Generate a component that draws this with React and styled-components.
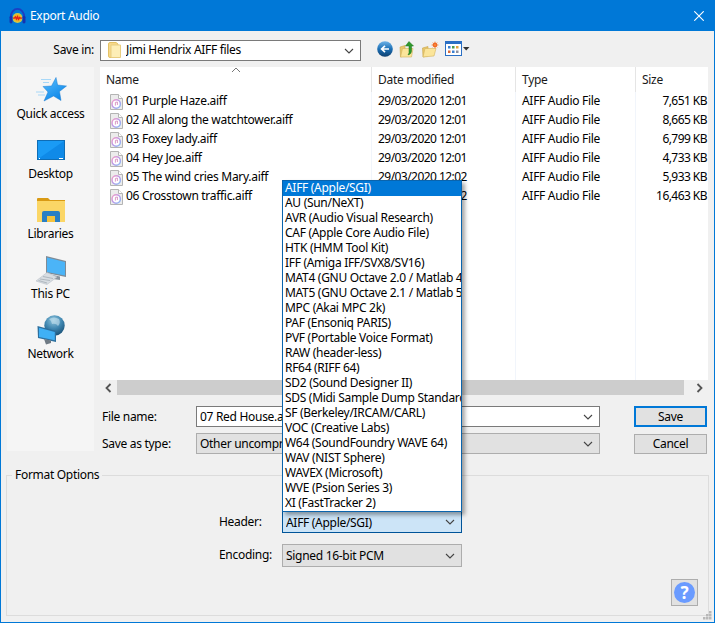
import React from "react";
import styled, { createGlobalStyle } from "styled-components";

const GlobalStyle = createGlobalStyle`
  html, body {
    margin: 0;
    padding: 0;
    background: #f0f0f0;
    overflow: hidden;
  }
  * {
    box-sizing: border-box;
  }
`;

const Window = styled.div`
  position: relative;
  width: 715px;
  height: 623px;
  border: 1px solid #0078d7;
  background: #f0f0f0;
  display: flex;
  flex-direction: column;
  font-family: "Noto Sans", "Open Sans", sans-serif;
  font-size: 12px;
  letter-spacing: -0.3px;
  color: #000;
`;
const TitleBar = styled.div`
  height: 30px;
  flex-shrink: 0;
  background: #0078d7;
  color: #fff;
  display: flex;
  align-items: center;
  padding: 0 10px 0 8px;
  gap: 4px;
`;
const TitleText = styled.div`
  flex: 1;
  padding-bottom: 1px;
`;
const TopArea = styled.div`
  padding: 0 6px;
`;
const SaveInRow = styled.div`
  margin-top: 9px;
  height: 21px;
  display: flex;
  align-items: center;
`;
const SaveInLabel = styled.div`
  width: 87px;
  text-align: right;
  margin-right: 6px;
  padding-bottom: 2px;
`;
const Combo = styled.div`
  position: relative;
  width: ${p => p.$width}px;
  height: ${p => p.$height || 21}px;
  display: flex;
  align-items: center;
  gap: 5px;
  padding: 0 4px 0 ${p => p.$pad || 3}px;
  background: ${p => p.$variant === "active" ? "#cce4f7" : p.$variant === "button" ? "#e1e1e1" : "#fff"};
  border: 1px solid ${p => p.$variant === "active" ? "#005499" : p.$variant === "button" ? "#adadad" : "#7a7a7a"};
`;
const ComboText = styled.div`
  flex: 1;
  white-space: nowrap;
  overflow: hidden;
  padding-bottom: ${p => p.$raised ? 2 : 0}px;
`;
const Toolbar = styled.div`
  display: flex;
  align-items: center;
  margin: 0 0 3px 16px;
  gap: 6px;
`;
const Main = styled.div`
  margin-top: 6px;
  display: flex;
  gap: 6px;
  align-items: flex-start;
`;
const Sidebar = styled.div`
  width: 87px;
  height: 384px;
  background: #f5f5f5;
  padding-top: 7px;
`;
const PlaceItem = styled.div`
  height: 60px;
  display: flex;
  flex-direction: column;
  align-items: center;
`;
const PlaceIcon = styled.div`
  height: 32px;
  display: flex;
  align-items: center;
  justify-content: center;
`;
const PlaceLabel = styled.div`
  line-height: 15px;
  white-space: nowrap;
`;
const RightColumn = styled.div`
  width: 608px;
`;
const ListView = styled.div`
  position: relative;
  height: 313px;
  background: #fff;
  display: flex;
  overflow: hidden;
`;
const SortCaret = styled.svg`
  position: absolute;
  left: 131px;
  top: 0;
`;
const ListColumn = styled.div`
  width: ${p => p.$width}px;
  flex-shrink: 0;
  border-right: 1px solid ${p => p.$last ? "transparent" : "#f1f5fb"};
`;
const ColumnHead = styled.div`
  height: 25px;
  margin-right: -1px;
  padding-left: ${p => p.$pad}px;
  padding-bottom: 1px;
  display: flex;
  align-items: center;
  color: #1a1a1a;
  border-right: 1px solid ${p => p.$last ? "transparent" : "#e5e5e5"};
`;
const Cell = styled.div`
  height: 19px;
  display: flex;
  align-items: center;
  white-space: nowrap;
  justify-content: ${p => p.$right ? "flex-end" : "flex-start"};
  padding-left: ${p => p.$pad}px;
  padding-bottom: 2px;
  gap: 3px;
  letter-spacing: ${p => p.$numeric ? "-0.55px" : "-0.3px"};
`;
const HScrollbar = styled.div`
  height: 15px;
  display: flex;
  align-items: center;
  justify-content: space-between;
  background: #f0f0f0;
`;
const ScrollArrow = styled.div`
  width: 17px;
  display: flex;
  justify-content: center;
`;
const ScrollThumb = styled.div`
  height: 15px;
  width: 567px;
  background: #cdcdcd;
  margin-right: auto;
`;
const FormGrid = styled.div`
  margin-top: 11px;
  display: grid;
  grid-template-columns: 96px 404px 34px 73px;
  grid-auto-rows: 21px;
  row-gap: 6px;
  align-items: center;
`;
const FormLabel = styled.div`
  padding-left: 2px;
`;
const Spacer = styled.div``;
const DialogButton = styled.div`
  height: ${p => p.$default ? 21 : 20}px;
  background: #e1e1e1;
  border: ${p => p.$default ? "2px solid #0078d7" : "1px solid #adadad"};
  display: flex;
  align-items: center;
  justify-content: center;
`;
const GroupBox = styled.fieldset`
  margin: 13px 5px 0;
  padding: 0 0 9px;
  border: 1px solid #dcdcdc;
  display: flex;
  flex-direction: column;
`;
const GroupLegend = styled.legend`
  margin-left: 5px;
  padding: 0 3px;
  line-height: 16px;
`;
const OptionRow = styled.div`
  display: grid;
  grid-template-columns: 63px 180px;
  align-items: center;
  padding-left: 212px;
  margin-top: ${p => p.$top}px;
`;
const OptionLabel = styled.div`
  padding-bottom: 2px;
`;
const PopupList = styled.div`
  position: absolute;
  left: -1px;
  bottom: 100%;
  width: 180px;
  background: #fff;
  border: 1px solid #0a64ad;
  box-shadow: 3px 3px 4px rgba(0, 0, 0, 0.35);
  overflow: hidden;
  z-index: 5;
`;
const PopupItem = styled.div`
  height: 15px;
  line-height: 13px;
  padding-left: 2px;
  white-space: nowrap;
  background: ${p => p.$selected ? "#0078d7" : "transparent"};
  color: ${p => p.$selected ? "#fff" : "#000"};
`;
const HelpButton = styled.div`
  align-self: flex-end;
  margin: 12px 10px 0 0;
  width: 27px;
  height: 27px;
  background: #e1e1e1;
  border: 1px solid #adadad;
  display: flex;
  align-items: center;
  justify-content: center;
`;
const HelpCircle = styled.div`
  width: 21px;
  height: 21px;
  border-radius: 50%;
  background: #6a9bff;
  color: #fff;
  font-size: 17px;
  font-weight: 700;
  line-height: 21px;
  text-align: center;
`;
const Grip = styled.svg`
  position: absolute;
  right: 2px;
  bottom: 2px;
`;

const ChevronDown = () => (
  <svg width="10" height="6" viewBox="0 0 10 6" style={{ flexShrink: 0, marginRight: 2 }}>
    <path d="M1 1 L5 5 L9 1" fill="none" stroke="#444" strokeWidth="1.1" />
  </svg>
);

const AudacityLogo = () => (
  <svg width="17" height="17" viewBox="0 0 16 16">
    <defs>
      <radialGradient id="aud" cx="50%" cy="50%" r="50%">
        <stop offset="0" stopColor="#ff7a1e" />
        <stop offset="0.6" stopColor="#f4b41c" />
        <stop offset="1" stopColor="#b8d060" />
      </radialGradient>
    </defs>
    <path d="M1.6 9 C1.6 -1.8 14.4 -1.8 14.4 9" fill="none" stroke="#1b3fc4" strokeWidth="1.7" />
    <circle cx="8" cy="9.4" r="4.8" fill="url(#aud)" />
    <path d="M3.8 9.6 H5 L6 8.4 L7 10.4 L8 8.2 L9 10.6 L10 8.8 L11 9.6 H12.2" fill="none" stroke="#e0201c" strokeWidth="1.2" />
    <rect x="0.5" y="7.5" width="2.8" height="7" rx="1.3" fill="#1533b0" />
    <rect x="12.7" y="7.5" width="2.8" height="7" rx="1.3" fill="#1533b0" />
  </svg>
);

const CloseIcon = () => (
  <svg width="10" height="10" viewBox="0 0 10 10">
    <path d="M0.3 0.3 L9.7 9.7 M9.7 0.3 L0.3 9.7" stroke="#fff" strokeWidth="1.1" />
  </svg>
);

const PaleFolder = () => (
  <svg width="13" height="16" viewBox="0 0 13 16" style={{ flexShrink: 0, marginBottom: 2 }}>
    <path d="M0.5 2 Q0.5 0.5 2 0.5 H8 L10 2 V15.5 H2 Q0.5 15.5 0.5 14 Z" fill="#f7d98a" stroke="#e4c266" />
    <path d="M3 3 H12.5 V15.5 H3 Z" fill="#fdeeb6" stroke="#e8cd80" />
  </svg>
);

const BackIcon = () => (
  <svg width="16" height="16" viewBox="0 0 16 16">
    <defs>
      <linearGradient id="back" x1="0" y1="0" x2="0" y2="1">
        <stop offset="0" stopColor="#6fb3e8" />
        <stop offset="0.5" stopColor="#1b6fb5" />
        <stop offset="1" stopColor="#0f3f6e" />
      </linearGradient>
    </defs>
    <circle cx="8" cy="8" r="7.8" fill="url(#back)" />
    <path d="M12 8 H5 M8 4.8 L4.6 8 L8 11.2" fill="none" stroke="#fff" strokeWidth="1.7" />
  </svg>
);

const UpFolderIcon = () => (
  <svg width="17" height="17" viewBox="0 0 17 17">
    <path d="M1 6 L6 4.5 V15 L1.5 16 Z" fill="#e8c76a" stroke="#c9a64a" strokeWidth="0.6" />
    <path d="M1.5 16 L3.5 7.5 H14 L12.5 16 Z" fill="#fbe59a" stroke="#d3b45c" strokeWidth="0.6" />
    <path d="M10 0.5 L14.5 5 H12.5 V10 Q12.5 13 9 14 Q10.5 12 10 9 V5 H6.5 Z" fill="#2f9a2c" stroke="#1d701b" strokeWidth="0.5" />
  </svg>
);

const NewFolderIcon = () => (
  <svg width="17" height="17" viewBox="0 0 17 17">
    <path d="M0.5 7 L6 5.5 V15 L1 16 Z" fill="#e8c76a" stroke="#c9a64a" strokeWidth="0.6" />
    <path d="M1 16 L3 7.5 H14 L12 15 Z" fill="#fbe59a" stroke="#d3b45c" strokeWidth="0.6" />
    <circle cx="13" cy="4" r="2.4" fill="#f0561c" />
    <path d="M13 0.5 V7.5 M9.5 4 H16.5 M10.6 1.6 L15.4 6.4 M15.4 1.6 L10.6 6.4" stroke="#f58a3c" strokeWidth="0.7" />
  </svg>
);

const ViewIcon = () => (
  <svg width="25" height="16" viewBox="0 0 25 16">
    <rect x="0.5" y="0.5" width="16" height="14" fill="#fff" stroke="#2a6fc4" />
    <rect x="0.5" y="0.5" width="16" height="2.5" fill="#2a6fc4" />
    <rect x="3" y="5" width="2.5" height="2.5" fill="#3a7fd0" />
    <rect x="7" y="5" width="2.5" height="2.5" fill="#4a9a50" />
    <rect x="11" y="5" width="2.5" height="2.5" fill="#e2a33a" />
    <rect x="3" y="9.5" width="2.5" height="2.5" fill="#d86a3a" />
    <rect x="7" y="9.5" width="2.5" height="2.5" fill="#3a7fd0" />
    <rect x="11" y="9.5" width="2.5" height="2.5" fill="#8a8fa0" />
    <path d="M18 6 H24.5 L21.2 9.5 Z" fill="#333" />
  </svg>
);

const StarIcon = () => (
  <svg width="32" height="26" viewBox="0 0 32 26">
    <defs>
      <linearGradient id="star" x1="0" y1="0" x2="0.6" y2="1">
        <stop offset="0" stopColor="#5cc0ff" />
        <stop offset="1" stopColor="#0c86e8" />
      </linearGradient>
    </defs>
    <path d="M6 2.5 H16 M8 5.5 H14 M1 15 H9 M3 18 H10" stroke="#a8d8f8" strokeWidth="1.2" />
    <path d="M21 0.5 L22.6 8 L31.5 9 L24.5 14.5 L26 23.5 L18.5 19 L9 24 L13 15 L8 9.5 L16.5 9 Z" fill="url(#star)" stroke="#1c7cd0" strokeWidth="0.5" />
  </svg>
);

const DesktopIcon = () => (
  <svg width="28" height="20" viewBox="0 0 28 20">
    <rect x="0.5" y="0.5" width="27" height="19" fill="#1a9bf5" stroke="#0f6db5" />
    <path d="M1 19 L27 1 V19 Z" fill="#0f8ae8" />
    <path d="M2 18.5 H3 M22 18.5 H26" stroke="#fff" strokeWidth="1" />
  </svg>
);

const LibrariesIcon = () => (
  <svg width="28" height="24" viewBox="0 0 28 24">
    <path d="M0 1 Q0 0 1 0 H11 L13 2 H28 V4 H0 Z" fill="#d99a14" />
    <rect x="0" y="3" width="28" height="21" fill="#fbd666" />
    <path d="M5 24 V15 Q5 13 7 13 H21 Q23 13 23 15 V24 H18 V18 H10 V24 Z" fill="#2a7fc4" />
    <rect x="10" y="18" width="8" height="6" fill="#f5c33e" />
  </svg>
);

const ThisPcIcon = () => (
  <svg width="32" height="30" viewBox="0 0 32 30">
    <path d="M11 1 L31 6 V22 L11 18 Z" fill="#7f8b96" />
    <path d="M12 2.5 L30 7 V20.5 L12 17 Z" fill="#4bb4f7" />
    <path d="M18 20 L25 21.5 V25 L18 24 Z" fill="#8a95a0" />
    <path d="M1 26 L12 17.5 L22 22 L12 29.5 Z" fill="#d8dde2" stroke="#b9c0c7" strokeWidth="0.6" />
    <path d="M5 24 L15 25.5 M8 21.5 L18 23.5 M3.5 25.5 L12 28" stroke="#a5adb5" strokeWidth="0.8" />
  </svg>
);

const NetworkIcon = () => (
  <svg width="28" height="30" viewBox="0 0 28 30">
    <defs>
      <radialGradient id="globe" cx="45%" cy="25%" r="75%">
        <stop offset="0" stopColor="#8fc4dc" />
        <stop offset="0.55" stopColor="#3f86b0" />
        <stop offset="1" stopColor="#1a5278" />
      </radialGradient>
    </defs>
    <circle cx="17.5" cy="10.5" r="10.2" fill="url(#globe)" />
    <path d="M12 4 Q15 6 15 9 Q19 8 21 11 Q24 8 22 4 Q17 1 12 4 Z" fill="#cfe7f2" opacity="0.55" />
    <path d="M0.5 11 L19 16 V27 L1 23 Z" fill="#2c6f9e" />
    <path d="M2 12.8 L17.8 17 V25.3 L2 22 Z" fill="#3fb0f5" />
    <path d="M7 24 L14 25.5 V28 L9 29.5 Z" fill="#6f7a84" />
  </svg>
);

const FileIcon = () => (
  <svg width="13" height="16" viewBox="0 0 13 16" style={{ flexShrink: 0, marginLeft: -1, marginTop: 2 }}>
    <defs>
      <linearGradient id="note" x1="0" y1="0" x2="1" y2="1">
        <stop offset="0" stopColor="#f5a0c4" />
        <stop offset="0.5" stopColor="#b896ea" />
        <stop offset="1" stopColor="#88c0f4" />
      </linearGradient>
    </defs>
    <path d="M0.5 0.5 H8.5 L12.5 4.5 V15.5 H0.5 Z" fill="#ececec" stroke="#b4b4b4" />
    <path d="M8.5 0.5 V4.5 H12.5" fill="#fff" stroke="#b4b4b4" />
    <circle cx="6.2" cy="10" r="4.2" fill="#fff" stroke="url(#note)" strokeWidth="1.5" />
    <path d="M5.4 11.6 V8.4 L7.4 8 V11" fill="none" stroke="#d080b8" strokeWidth="0.8" />
  </svg>
);

const places = [
  { label: "Quick access", icon: <StarIcon /> },
  { label: "Desktop", icon: <DesktopIcon /> },
  { label: "Libraries", icon: <LibrariesIcon /> },
  { label: "This PC", icon: <ThisPcIcon /> },
  { label: "Network", icon: <NetworkIcon /> }
];

const files = [
  { name: "01 Purple Haze.aiff", date: "29/03/2020 12:01", size: "7,651 KB" },
  { name: "02 All along the watchtower.aiff", date: "29/03/2020 12:01", size: "8,665 KB" },
  { name: "03 Foxey lady.aiff", date: "29/03/2020 12:01", size: "6,799 KB" },
  { name: "04 Hey Joe.aiff", date: "29/03/2020 12:01", size: "4,733 KB" },
  { name: "05 The wind cries Mary.aiff", date: "29/03/2020 12:02", size: "5,933 KB" },
  { name: "06 Crosstown traffic.aiff", date: "29/03/2020 12:02", size: "16,463 KB" }
];

const headerTypes = [
  "AIFF (Apple/SGI)",
  "AU (Sun/NeXT)",
  "AVR (Audio Visual Research)",
  "CAF (Apple Core Audio File)",
  "HTK (HMM Tool Kit)",
  "IFF (Amiga IFF/SVX8/SV16)",
  "MAT4 (GNU Octave 2.0 / Matlab 4.2)",
  "MAT5 (GNU Octave 2.1 / Matlab 5.0)",
  "MPC (Akai MPC 2k)",
  "PAF (Ensoniq PARIS)",
  "PVF (Portable Voice Format)",
  "RAW (header-less)",
  "RF64 (RIFF 64)",
  "SD2 (Sound Designer II)",
  "SDS (Midi Sample Dump Standard)",
  "SF (Berkeley/IRCAM/CARL)",
  "VOC (Creative Labs)",
  "W64 (SoundFoundry WAVE 64)",
  "WAV (NIST Sphere)",
  "WAVEX (Microsoft)",
  "WVE (Psion Series 3)",
  "XI (FastTracker 2)"
];

export default function App() {
  return (
    <Window>
      <GlobalStyle />
      <TitleBar>
        <AudacityLogo />
        <TitleText>Export Audio</TitleText>
        <CloseIcon />
      </TitleBar>
      <TopArea>
        <SaveInRow>
          <SaveInLabel>Save in:</SaveInLabel>
          <Combo $width={261} $pad={7}>
            <PaleFolder />
            <ComboText $raised>Jimi Hendrix AIFF files</ComboText>
            <ChevronDown />
          </Combo>
          <Toolbar>
            <BackIcon />
            <UpFolderIcon />
            <NewFolderIcon />
            <ViewIcon />
          </Toolbar>
        </SaveInRow>
        <Main>
          <Sidebar>
            {places.map(place => (
              <PlaceItem key={place.label}>
                <PlaceIcon>{place.icon}</PlaceIcon>
                <PlaceLabel>{place.label}</PlaceLabel>
              </PlaceItem>
            ))}
          </Sidebar>
          <RightColumn>
            <ListView>
              <SortCaret width="10" height="6" viewBox="0 0 10 6">
                <path d="M1 5 L5 1 L9 5" fill="none" stroke="#777" strokeWidth="1" />
              </SortCaret>
              <ListColumn $width={272}>
                <ColumnHead $pad={6}>Name</ColumnHead>
                {files.map(file => (
                  <Cell key={file.name} $pad={11}>
                    <FileIcon />
                    {file.name}
                  </Cell>
                ))}
              </ListColumn>
              <ListColumn $width={144}>
                <ColumnHead $pad={6}>Date modified</ColumnHead>
                {files.map(file => (
                  <Cell key={file.name} $pad={6} $numeric>{file.date}</Cell>
                ))}
              </ListColumn>
              <ListColumn $width={120}>
                <ColumnHead $pad={6}>Type</ColumnHead>
                {files.map(file => (
                  <Cell key={file.name} $pad={6}>AIFF Audio File</Cell>
                ))}
              </ListColumn>
              <ListColumn $width={72} $last>
                <ColumnHead $pad={6} $last>Size</ColumnHead>
                {files.map(file => (
                  <Cell key={file.name} $right $numeric>{file.size}</Cell>
                ))}
              </ListColumn>
            </ListView>
            <HScrollbar>
              <ScrollArrow>
                <svg width="7" height="10" viewBox="0 0 7 10">
                  <path d="M5.5 1 L1.5 5 L5.5 9" fill="none" stroke="#555" strokeWidth="1.8" />
                </svg>
              </ScrollArrow>
              <ScrollThumb />
              <ScrollArrow>
                <svg width="7" height="10" viewBox="0 0 7 10">
                  <path d="M1.5 1 L5.5 5 L1.5 9" fill="none" stroke="#555" strokeWidth="1.8" />
                </svg>
              </ScrollArrow>
            </HScrollbar>
            <FormGrid>
              <FormLabel>File name:</FormLabel>
              <Combo $width={404}>
                <ComboText>07 Red House.aiff</ComboText>
                <ChevronDown />
              </Combo>
              <Spacer />
              <DialogButton $default>Save</DialogButton>
              <FormLabel>Save as type:</FormLabel>
              <Combo $width={404} $variant="button">
                <ComboText>Other uncompressed files</ComboText>
                <ChevronDown />
              </Combo>
              <Spacer />
              <DialogButton>Cancel</DialogButton>
            </FormGrid>
          </RightColumn>
        </Main>
      </TopArea>
      <GroupBox>
        <GroupLegend>Format Options</GroupLegend>
        <OptionRow $top={28}>
          <OptionLabel>Header:</OptionLabel>
          <Combo $width={180} $height={22} $variant="active">
            <PopupList>
              {headerTypes.map((type, i) => (
                <PopupItem key={type} $selected={i === 0}>{type}</PopupItem>
              ))}
            </PopupList>
            <ComboText>AIFF (Apple/SGI)</ComboText>
            <ChevronDown />
          </Combo>
        </OptionRow>
        <OptionRow $top={11}>
          <OptionLabel>Encoding:</OptionLabel>
          <Combo $width={180} $height={23} $variant="button">
            <ComboText>Signed 16-bit PCM</ComboText>
            <ChevronDown />
          </Combo>
        </OptionRow>
        <HelpButton>
          <HelpCircle>?</HelpCircle>
        </HelpButton>
      </GroupBox>
      <Grip width="9" height="9" viewBox="0 0 9 9">
        <rect x="6" y="0" width="2.5" height="2.5" fill="#b8b8b8" />
        <rect x="3" y="3" width="2.5" height="2.5" fill="#b8b8b8" />
        <rect x="6" y="3" width="2.5" height="2.5" fill="#b8b8b8" />
        <rect x="0" y="6" width="2.5" height="2.5" fill="#b8b8b8" />
        <rect x="3" y="6" width="2.5" height="2.5" fill="#b8b8b8" />
        <rect x="6" y="6" width="2.5" height="2.5" fill="#b8b8b8" />
      </Grip>
    </Window>
  );
}
